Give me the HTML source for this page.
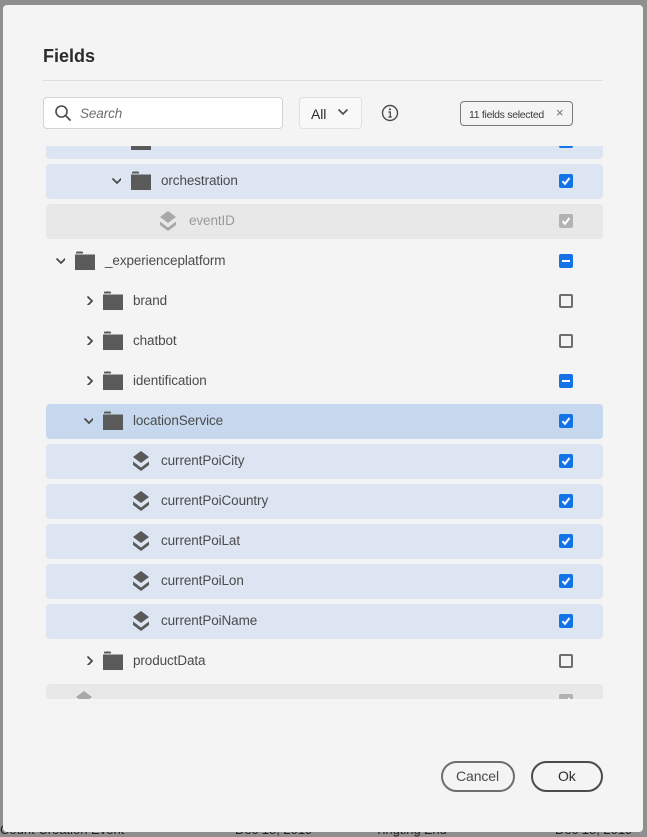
<!DOCTYPE html>
<html><head><meta charset="utf-8"><style>
*{margin:0;padding:0;box-sizing:border-box}
body{width:647px;height:837px;background:#8f8f8f;position:relative;overflow:hidden;font-family:"Liberation Sans",sans-serif}
.bgt{position:absolute;font-size:13px;color:#222}
.dlg{position:absolute;left:3px;top:5px;width:640px;height:827px;background:#f4f4f4;border-radius:4px}
.a{position:absolute}
h1{position:absolute;left:43px;top:46px;font-size:18px;font-weight:bold;color:#2c2c2c}
.list{position:absolute;left:0;top:146px;width:647px;height:553px;overflow:hidden}
.row{position:absolute;left:46px;width:557px;height:35px;border-radius:4px}
.t{position:absolute;font-size:13.5px;color:#4b4b4b;line-height:16px;letter-spacing:-0.1px}
.cb{position:absolute;left:559px;width:14px;height:14px;border-radius:2px;background:#1473e6}
.cb.off{background:#f4f4f4;border:2px solid #6e6e6e}
.cb.dis{background:#b3b3b3}
.fold{position:absolute;width:20px;height:19px}
.chev{position:absolute;width:10px;height:10px}
</style></head><body>
<div class="bgt" style="left:0;top:822px">Count Creation Event</div>
<div class="bgt" style="left:235px;top:822px">Dec 18, 2019</div>
<div class="bgt" style="left:375px;top:822px">Tingting Zhu</div>
<div class="bgt" style="left:555px;top:822px">Dec 18, 2019</div>
<div class="dlg"></div>
<h1>Fields</h1>
<div class="a" style="left:43px;top:80px;width:560px;height:1px;background:#dedede"></div>
<div class="a" style="left:43px;top:97px;width:240px;height:32px;background:#fff;border:1px solid #d3d3d3;border-radius:4px"></div>
<svg class="a" style="left:54px;top:104px" width="18" height="18" viewBox="0 0 18 18"><circle cx="7.5" cy="7.5" r="5.5" fill="none" stroke="#4b4b4b" stroke-width="1.6"/><path d="M11.5 11.5L16 16" stroke="#4b4b4b" stroke-width="1.8" stroke-linecap="round"/></svg>
<div class="t" style="left:80px;top:106px;font-style:italic;color:#6e6e6e">Search</div>
<div class="a" style="left:299px;top:97px;width:63px;height:32px;background:#f8f8f8;border:1px solid #e0e0e0;border-radius:4px"></div>
<div class="t" style="left:311px;top:106px;font-size:14px;color:#2c2c2c">All</div>
<svg class="a" style="left:337px;top:108px" width="12" height="8"><path d="M1.5 1.5L6 6L10.5 1.5" fill="none" stroke="#4b4b4b" stroke-width="1.6"/></svg>
<svg class="a" style="left:381px;top:104px" width="18" height="18"><circle cx="9" cy="9" r="7.5" fill="none" stroke="#4b4b4b" stroke-width="1.4"/><circle cx="9" cy="5.3" r="1.1" fill="#4b4b4b"/><path d="M7.3 8h2v5M7.3 13h3.5" stroke="#4b4b4b" stroke-width="1.3" fill="none"/></svg>
<div class="a" style="left:460px;top:101px;width:113px;height:25px;border:1px solid #7a7a7a;border-radius:4px;background:#f4f4f4"></div>
<div class="t" style="left:469px;top:107px;font-size:10.5px;letter-spacing:-0.3px;color:#3a3a3a">11 fields selected</div>
<div class="t" style="left:556px;top:105px;font-size:13px;color:#6e6e6e">×</div>

<div class="list" id="L"></div>

<div class="a" style="left:441px;top:761px;width:74px;height:31px;border:2px solid #6e6e6e;border-radius:16px"></div>
<div class="t" style="left:456px;top:768px;font-size:14px;color:#4b4b4b">Cancel</div>
<div class="a" style="left:531px;top:761px;width:72px;height:31px;border:2px solid #4b4b4b;border-radius:16px"></div>
<div class="t" style="left:558px;top:768px;font-size:14px;color:#2c2c2c">Ok</div>

<script>
var rows=[
[141,'',2,'f',0,'#dce5f1','on'],
[181,'orchestration',2,'f',1,'#dce5f1','on'],
[221,'eventID',3,'i',0,'#e8e8e8','dis'],
[261,'_experienceplatform',0,'f',1,'','mix'],
[301,'brand',1,'f',2,'','off'],
[341,'chatbot',1,'f',2,'','off'],
[381,'identification',1,'f',2,'','mix'],
[421,'locationService',1,'f',1,'#c5d8ee','on'],
[461,'currentPoiCity',2,'i',0,'#dce5f1','on'],
[501,'currentPoiCountry',2,'i',0,'#dce5f1','on'],
[541,'currentPoiLat',2,'i',0,'#dce5f1','on'],
[581,'currentPoiLon',2,'i',0,'#dce5f1','on'],
[621,'currentPoiName',2,'i',0,'#dce5f1','on'],
[661,'productData',1,'f',2,'','off'],
[701,'',1,'i',0,'#e8e8e8','dis']];
var h='';
rows.forEach(function(r,k){
 var cy=r[0]-146, lv=r[2];
 var fx=[75,103,131,159][lv];
 var dis=r[6]=='dis';
 if(r[5])h+='<div class="row" style="top:'+(cy-17)+'px;background:'+r[5]+'"></div>';
 if(r[4]==1)h+='<svg class="chev" style="left:'+(fx-20)+'px;top:'+(cy-4)+'px" width="12" height="8"><path d="M1.5 1.5L6 6L10.5 1.5" fill="none" stroke="#4b4b4b" stroke-width="1.8"/></svg>';
 if(r[4]==2)h+='<svg class="chev" style="left:'+(fx-17)+'px;top:'+(cy-6)+'px" width="8" height="12"><path d="M1.5 1.5L6 6L1.5 10.5" fill="none" stroke="#4b4b4b" stroke-width="1.8"/></svg>';
 var col=dis?'#a8a8a8':'#5a5a5a';
 if(r[3]=='f')h+='<svg class="fold" style="left:'+fx+'px;top:'+(cy-10)+'px" viewBox="0 0 20 19"><path d="M0 3.5h20v15.5H0z M1 1.5Q1 0.5 2 0.5H7Q8 0.5 8 1.5V2.5H1z" fill="'+col+'"/></svg>';
 else { var ix=(lv==3)?158:131; if(k==14)ix=74;
  h+='<svg class="a" style="left:'+ix+'px;top:'+(cy-11)+'px" width="20" height="22" viewBox="0 0 20 22"><path d="M10 1L18 7L10 13L2 7Z" fill="'+col+'"/><path d="M2 11.5L10 17.5L18 11.5V15L10 21L2 15Z" fill="'+col+'"/></svg>';}
 var tx=fx+30; if(r[3]=='i')tx=(lv==3)?189:161;
 if(r[1])h+='<div class="t" style="left:'+tx+'px;top:'+(cy-8)+'px;color:'+(dis?'#9a9a9a':'#4b4b4b')+'">'+r[1]+'</div>';
 var c=r[6];
 h+='<div class="cb '+(c=='off'?'off':c=='dis'?'dis':'')+'" style="top:'+(cy-7)+'px">';
 if(c=='on'||c=='dis')h+='<svg width="14" height="14"><path d="M3.5 7.2L6 9.8L10.5 4" fill="none" stroke="#fff" stroke-width="2"/></svg>';
 if(c=='mix')h+='<div style="position:absolute;left:3px;top:6px;width:8px;height:2px;background:#fff"></div>';
 h+='</div>';
});
document.getElementById('L').innerHTML=h;
</script>
</body></html>
